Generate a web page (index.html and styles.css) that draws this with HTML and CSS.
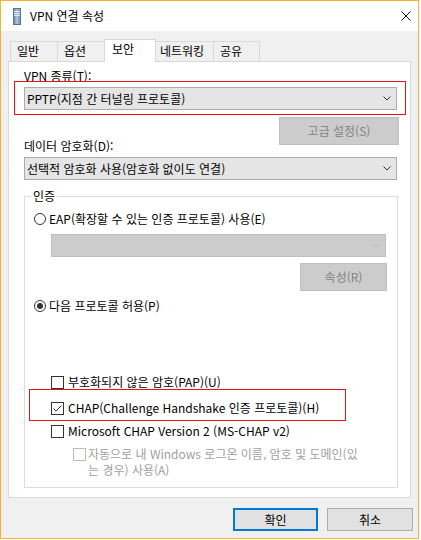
FILE: index.html
```html
<!DOCTYPE html>
<html lang="ko">
<head>
    <meta charset="UTF-8">
    <title>VPN 연결 속성</title>
    <link rel="stylesheet" href="styles.css">
</head>
<body>
    <div class="window">
        <!-- Title bar -->
        <div class="titlebar">
            <svg class="app-icon" width="8" height="17" viewBox="0 0 8 17">
                <defs>
                    <linearGradient id="tower" x1="0" x2="1" y1="0" y2="0">
                        <stop offset="0" stop-color="#5E7EA6"/>
                        <stop offset="0.5" stop-color="#B4C6DC"/>
                        <stop offset="1" stop-color="#6C86A8"/>
                    </linearGradient>
                </defs>
                <rect x="0.5" y="0.5" width="7" height="16" fill="url(#tower)" stroke="#5A7394"/>
                <path d="M1 3.5h6M1 5.5h6M1 7.5h6" stroke="#E6EDF6"/>
            </svg>
            <span class="title">VPN 연결 속성</span>
            <svg class="close" width="10" height="10" viewBox="0 0 10 10">
                <path d="M0.5 0.5L9.5 9.5M9.5 0.5L0.5 9.5" stroke="#111" fill="none"/>
            </svg>
        </div>

        <div class="client">
            <div class="tabs">
                <div class="tab tab-general">일반</div>
                <div class="tab tab-options">옵션</div>
                <div class="tab tab-security active">보안</div>
                <div class="tab tab-network">네트워킹</div>
                <div class="tab tab-sharing">공유</div>
            </div>

            <div class="panel">
                <div class="field-label vpn-label">VPN 종류(T):</div>
                <div class="combo marked">
                    <span>PPTP(지점 간 터널링 프로토콜)</span>
                    <svg class="chevron" width="8" height="5" viewBox="0 0 8 5"><polyline points="0.5,0.5 4,4 7.5,0.5"/></svg>
                </div>
                <button class="btn btn-advanced" disabled>고급 설정(S)</button>

                <div class="field-label enc-label">데이터 암호화(D):</div>
                <div class="combo">
                    <span>선택적 암호화 사용(암호화 없이도 연결)</span>
                    <svg class="chevron" width="8" height="5" viewBox="0 0 8 5"><polyline points="0.5,0.5 4,4 7.5,0.5"/></svg>
                </div>

                <fieldset class="group">
                    <legend>인증</legend>
                    <div class="option eap"><span class="radio"></span>EAP(확장할 수 있는 인증 프로토콜) 사용(E)</div>
                    <div class="combo disabled">
                        <span></span>
                        <svg class="chevron" width="8" height="5" viewBox="0 0 8 5"><polyline points="0.5,0.5 4,4 7.5,0.5"/></svg>
                    </div>
                    <button class="btn btn-props" disabled>속성(R)</button>

                    <div class="option allow"><span class="radio checked"></span>다음 프로토콜 허용(P)</div>

                    <div class="check-row pap"><span class="checkbox"></span>부호화되지 않은 암호(PAP)(U)</div>
                    <div class="check-row chap marked-row">
                        <span class="checkbox">
                            <svg width="11" height="11" viewBox="0 0 11 11"><polyline points="1.5,5.5 4,8 9.5,2.5"/></svg>
                        </span>CHAP(Challenge Handshake 인증 프로토콜)(H)
                    </div>
                    <div class="check-row mschap"><span class="checkbox"></span>Microsoft CHAP Version 2 (MS-CHAP v2)</div>
                    <div class="check-row auto"><span class="checkbox"></span><span>자동으로 내 Windows 로그온 이름, 암호 및 도메인(있<br>는 경우) 사용(A)</span></div>
                </fieldset>
            </div>

            <div class="actions">
                <button class="btn btn-ok">확인</button>
                <button class="btn btn-cancel">취소</button>
            </div>
        </div>
    </div>
</body>
</html>
```

FILE: styles.css
```css
* {
    box-sizing: border-box;
}

body {
    margin: 0;
    background-color: #fff;
    color: #000;
    font-family: "Noto Sans CJK KR", "Noto Sans", sans-serif;
    font-size: 12px;
}

.window {
    width: 419px;
    height: 539px;
    border: 1px solid #F5B335;
    background-color: #F0F0F0;
    display: flex;
    flex-direction: column;
}

/* title bar */
.titlebar {
    flex: none;
    height: 30px;
    background-color: #fff;
    display: flex;
    align-items: center;
}

.app-icon {
    margin-left: 12px;
}

.title {
    margin-left: 9px;
    line-height: 14px;
}

.close {
    margin-left: auto;
    margin-right: 7px;
}

/* tabs */
.tabs {
    display: flex;
    align-items: flex-end;
    height: 22px;
    margin: 8px 0 0 9px;
}

.tab {
    height: 20px;
    border: 1px solid #D9D9D9;
    border-bottom: none;
    background-color: #F0F0F0;
    line-height: 18px;
    padding-left: 6px;
    margin-left: -1px;
}

.tab-general { width: 48px; margin-left: 0; }
.tab-options { width: 48px; }
.tab-security { width: 52px; padding-left: 7px; }
.tab-network { width: 59px; padding-left: 4px; }
.tab-sharing { width: 47px; }

.tab.active {
    position: relative;
    z-index: 1;
    height: 23px;
    margin-bottom: -1px;
    background-color: #fff;
    line-height: 17px;
}

/* panel */
.panel {
    width: 403px;
    height: 437px;
    margin-left: 7px;
    border: 1px solid #D9D9D9;
    background-color: #fff;
    padding-left: 15px;
}

.field-label {
    line-height: 14px;
}

.vpn-label {
    margin-top: 7px;
}

.enc-label {
    margin-top: -6px;
}

.combo {
    width: 373px;
    height: 23px;
    margin-top: 4px;
    border: 1px solid #ACACAC;
    background-color: #E5E5E5;
    display: flex;
    align-items: center;
    justify-content: space-between;
    padding: 0 5px 0 2px;
    line-height: 14px;
}

.chevron polyline {
    fill: none;
    stroke: #333;
}

.combo.disabled {
    width: 335px;
    margin: 7px 0 0 17px;
    background-color: #CCCCCC;
    border-color: #BFBFBF;
}

.combo.disabled .chevron polyline {
    stroke: #B3B3B3;
}

/* red highlight marks */
.marked,
.marked-row {
    position: relative;
}

.marked::after,
.marked-row::after {
    content: "";
    position: absolute;
    border: 1px solid #EE1111;
}

.marked::after {
    inset: -7px -10px -6px -11px;
}

.marked-row::after {
    inset: -11px 51px -5px -5px;
}

/* buttons */
.btn {
    display: block;
    height: 28px;
    padding: 0;
    border: 1px solid #ADADAD;
    background-color: #E1E1E1;
    font-family: inherit;
    font-size: 12px;
    line-height: 14px;
    color: #000;
}

.btn:disabled {
    background-color: #CCCCCC;
    border-color: #BFBFBF;
    color: #838383;
}

.btn-advanced {
    width: 120px;
    margin: 7px 11px 0 auto;
}

.btn-props {
    width: 87px;
    margin: 6px 10px 0 auto;
}

/* authentication group */
.group {
    width: 374px;
    min-width: 0;
    margin: 9px 0 0;
    border: 1px solid #DCDCDC;
    padding: 0 0 9px 9px;
}

.group legend {
    padding: 0 2px;
    margin-left: -3px;
    line-height: 14px;
}

.option {
    display: flex;
    align-items: center;
    height: 16px;
    line-height: 16px;
}

.eap { margin-top: 8px; }
.allow { margin-top: 7px; }

.radio {
    flex: none;
    width: 12px;
    height: 12px;
    margin-right: 3px;
    border: 1px solid #333;
    border-radius: 50%;
    background-color: #fff;
    display: flex;
    align-items: center;
    justify-content: center;
}

.radio.checked::after {
    content: "";
    width: 6px;
    height: 6px;
    border-radius: 50%;
    background-color: #333;
}

.check-row {
    display: flex;
    align-items: center;
    height: 16px;
    line-height: 16px;
    padding-left: 17px;
}

.pap { margin-top: 60px; }
.chap { margin-top: 10px; }
.mschap { margin-top: 7px; }

.checkbox {
    flex: none;
    width: 13px;
    height: 13px;
    margin-right: 4px;
    border: 1px solid #333;
    background-color: #fff;
    display: flex;
    align-items: center;
    justify-content: center;
}

.checkbox polyline {
    fill: none;
    stroke: #333;
}

.auto {
    height: auto;
    margin-top: 7px;
    padding-left: 39px;
    align-items: flex-start;
    color: #A0A0A0;
}

.auto .checkbox {
    margin-top: 2px;
    margin-right: 2px;
    border-color: #BCBCBC;
}

/* dialog buttons */
.actions {
    display: flex;
    justify-content: flex-end;
    gap: 9px;
    margin-top: 10px;
    padding-right: 5px;
}

.actions .btn {
    height: 23px;
}

.btn-ok {
    width: 85px;
    border: 2px solid #0078D7;
}

.btn-cancel {
    width: 86px;
}
```
